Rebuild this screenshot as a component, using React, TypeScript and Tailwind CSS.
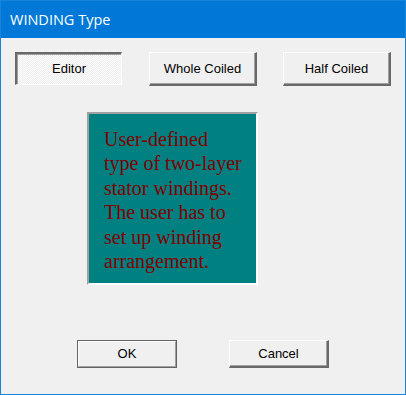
const raised =
    "border-t border-l border-t-white border-l-white border-r-2 border-b-2 border-r-[#696969] border-b-[#696969] shadow-[inset_-1px_-1px_0_#a0a0a0] bg-[#f0f0f0]";

export default function App() {
    return (
        <div className="w-[406px] h-[395px] flex flex-col border border-[#1883d7] bg-[#f0f0f0] font-['Liberation_Sans',Arial,sans-serif] text-black">
            <div className="h-[37px] bg-[#0078d7] flex items-center pl-[9px] text-white text-[14.5px] font-['Open_Sans','Noto_Sans',sans-serif]">
                WINDING Type
            </div>
            <div className="flex mt-[14px] ml-[14px] text-[13px]">
                <div className="w-[107px] h-[33px] flex items-center justify-center border-t-2 border-l-2 border-t-[#696969] border-l-[#696969] border-r border-b border-r-white border-b-white shadow-[inset_1px_1px_0_#a0a0a0] bg-[repeating-conic-gradient(#ffffff_0_25%,#ececec_0_50%)] bg-[length:2px_2px]">
                    Editor
                </div>
                <div className={`w-[108px] h-[34px] ml-[27px] flex items-center justify-center ${raised}`}>
                    Whole Coiled
                </div>
                <div className={`w-[108px] h-[34px] ml-[26px] flex items-center justify-center ${raised}`}>
                    Half Coiled
                </div>
            </div>
            <div className="ml-[86px] mt-[26px] w-[171px] h-[173px] border-2 border-t-[#a0a0a0] border-l-[#a0a0a0] border-r-white border-b-white bg-[#008080] pl-[15px] pt-[13px]">
                <p className="text-[#800000] text-[20px] leading-[24.4px] font-['Liberation_Serif','Times_New_Roman',serif]">
                    User-defined<br />
                    type of two-layer<br />
                    stator windings.<br />
                    The user has to<br />
                    set up winding<br />
                    arrangement.
                </p>
            </div>
            <div className="flex mt-[55px] ml-[76px] text-[13px]">
                <div className="w-[100px] h-[28px] border border-[#646464] flex">
                    <div className="flex-1 flex items-center justify-center border-t border-l border-t-white border-l-white border-r border-b border-r-[#a0a0a0] border-b-[#a0a0a0] bg-[#f0f0f0]">
                        OK
                    </div>
                </div>
                <div className={`w-[100px] h-[28px] ml-[52px] flex items-center justify-center ${raised}`}>
                    Cancel
                </div>
            </div>
        </div>
    );
}
